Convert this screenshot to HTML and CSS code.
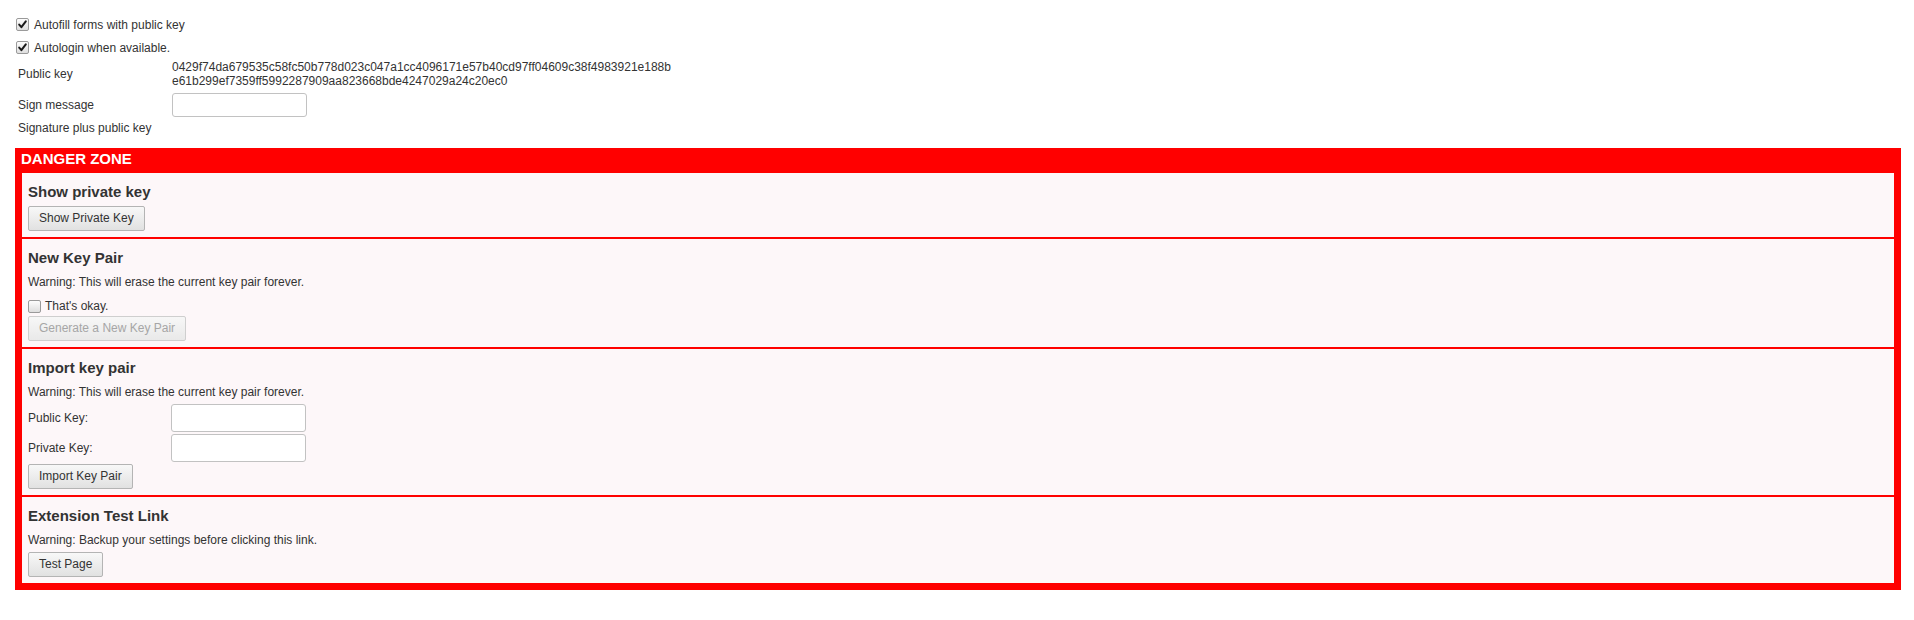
FILE: index.html
```html
<!DOCTYPE html>
<html>
<head>
<meta charset="utf-8">
<title>Options</title>
<link rel="stylesheet" href="styles.css">
</head>
<body>
<div class="page">
  <label class="opt"><span class="cb"><svg viewBox="0 0 11 11" width="11" height="11"><path d="M2.2 5.6 L4.4 8.2 L8.8 2.4" fill="none" stroke="#1a1a1a" stroke-width="2" stroke-linecap="round" stroke-linejoin="round"/></svg></span><span>Autofill forms with public key</span></label>
  <label class="opt"><span class="cb"><svg viewBox="0 0 11 11" width="11" height="11"><path d="M2.2 5.6 L4.4 8.2 L8.8 2.4" fill="none" stroke="#1a1a1a" stroke-width="2" stroke-linecap="round" stroke-linejoin="round"/></svg></span><span>Autologin when available.</span></label>

  <div class="field pub">
    <div class="lbl">Public key</div>
    <div class="hex">0429f74da679535c58fc50b778d023c047a1cc4096171e57b40cd97ff04609c38f4983921e188be61b299ef7359ff5992287909aa823668bde4247029a24c20ec0</div>
  </div>
  <div class="field sign">
    <div class="lbl">Sign message</div>
    <input class="txt" type="text">
  </div>
  <div class="field sig">
    <div class="lbl wide">Signature plus public key</div>
  </div>

  <div class="danger">
    <div class="danger-title">DANGER ZONE</div>
    <div class="sections">
      <section class="dz">
        <h3>Show private key</h3>
        <button class="btn mt5">Show Private Key</button>
      </section>
      <section class="dz">
        <h3>New Key Pair</h3>
        <div class="warn">Warning: This will erase the current key pair forever.</div>
        <label class="chk"><span class="cb off"></span><span>That's okay.</span></label>
        <button class="btn disabled" disabled>Generate a New Key Pair</button>
      </section>
      <section class="dz">
        <h3>Import key pair</h3>
        <div class="warn">Warning: This will erase the current key pair forever.</div>
        <div class="krow mt3"><div class="klbl">Public Key:</div><input class="txt tall" type="text"></div>
        <div class="krow mt2"><div class="klbl">Private Key:</div><input class="txt tall" type="text"></div>
        <button class="btn mt2">Import Key Pair</button>
      </section>
      <section class="dz">
        <h3>Extension Test Link</h3>
        <div class="warn">Warning: Backup your settings before clicking this link.</div>
        <button class="btn mt3">Test Page</button>
      </section>
    </div>
  </div>
</div>
</body>
</html>
```

FILE: styles.css
```css
html, body {
  margin: 0;
  background: #fff;
}
body {
  font-family: "Liberation Sans", Arial, sans-serif;
  font-size: 12px;
  line-height: 14px;
  color: #333;
}
.page {
  padding: 13px 13px 0 15px;
}
.opt {
  display: flex;
  align-items: center;
  height: 23px;
  padding-left: 1px;
}
.cb {
  flex: none;
  width: 13px;
  height: 13px;
  box-sizing: border-box;
  border: 1px solid #9a9a9a;
  border-radius: 2px;
  background: linear-gradient(#fdfdfd, #dedede);
  margin-right: 5px;
  display: flex;
  align-items: center;
  justify-content: center;
}
.cb svg {
  display: block;
}
.field {
  display: flex;
  align-items: center;
  padding-left: 3px;
}
.lbl {
  flex: none;
  width: 154px;
}
.lbl.wide {
  width: auto;
}
.pub {
  margin-top: 1px;
}
.hex {
  width: 502px;
  word-break: break-all;
  line-height: 14px;
}
.sign {
  margin-top: 5px;
}
.sig {
  margin-top: 4px;
  height: 14px;
}
.txt {
  width: 135px;
  height: 24px;
  box-sizing: border-box;
  border: 1px solid #c2c2c2;
  border-radius: 3px;
  margin: 0;
  padding: 0 4px;
  background: #fff;
  font: inherit;
}
.txt.tall {
  height: 28px;
}
.danger {
  margin-top: 13px;
  background: #ff0000;
  padding: 0 7px 7px;
}
.danger-title {
  height: 23px;
  padding-top: 2px;
  line-height: 18px;
  font-size: 15px;
  font-weight: bold;
  color: #fff;
  margin-left: -1px;
}
.sections {
  display: flex;
  flex-direction: column;
  gap: 2px;
}
.dz {
  background: #fdf7f9;
  padding: 10px 6px 6px;
  display: flex;
  flex-direction: column;
  align-items: flex-start;
}
.dz h3 {
  margin: 0;
  font-size: 15px;
  line-height: 18px;
  font-weight: bold;
  color: #333;
}
.warn {
  margin-top: 6px;
  line-height: 18px;
}
.chk {
  margin-top: 5px;
  height: 20px;
  display: flex;
  align-items: center;
}
.chk .cb {
  margin-right: 4px;
}
.krow {
  display: flex;
  align-items: center;
}
.klbl {
  flex: none;
  width: 143px;
}
.btn {
  height: 25px;
  box-sizing: border-box;
  margin: 0;
  padding: 0 10px;
  border: 1px solid #b4b4b4;
  border-radius: 2px;
  background: linear-gradient(#f8f8f8, #e1e1e1);
  font-family: "Liberation Sans", Arial, sans-serif;
  font-size: 12px;
  line-height: 23px;
  color: #333;
}
.btn.disabled {
  color: #a6a6a6;
  border-color: #cfcfcf;
  background: linear-gradient(#f7f7f7, #e9e9e9);
}
.mt2 { margin-top: 2px; }
.mt3 { margin-top: 3px; }
.mt5 { margin-top: 5px; }
```
